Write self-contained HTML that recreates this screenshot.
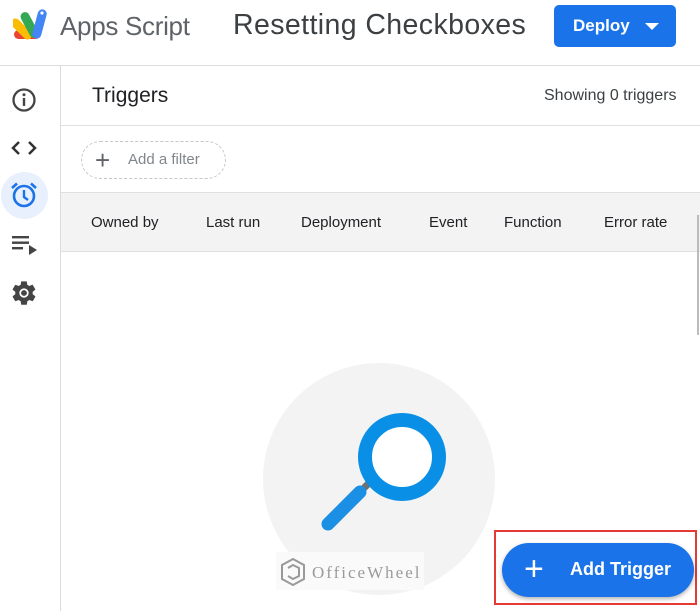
<!DOCTYPE html>
<html><head><style>
*{margin:0;padding:0;box-sizing:border-box}
body{width:700px;height:611px;background:#fff;font-family:"Liberation Sans",Arial,sans-serif;position:relative;overflow:hidden;color:#202124}
.a{position:absolute}
</style></head><body>
<svg class="a" style="left:13px;top:8px" width="42" height="34" viewBox="0 0 42 34">
<rect x="1" y="22" width="26" height="9" rx="4.5" fill="#ea4335"/>
<rect x="4" y="8" width="9" height="26" rx="4.5" fill="#fbbc04" transform="rotate(-45 8.5 21)"/>
<rect x="12" y="3" width="9" height="28" rx="4.5" fill="#34a853" transform="rotate(-28 16.5 17)"/>
<rect x="22" y="1" width="9" height="30" rx="4.5" fill="#4285f4" transform="rotate(15 26.5 16)"/>
<circle cx="29" cy="5" r="1.6" fill="#fff"/><circle cx="21" cy="4" r="1.6" fill="#fff"/>
</svg>
<div class="a" style="left:60px;top:11px;font-size:26px;color:#5f6368;letter-spacing:-0.3px">Apps Script</div>
<div class="a" style="left:233px;top:9px;font-size:28.5px;color:#3c4043;letter-spacing:0.4px">Resetting Checkboxes</div>
<div class="a" style="left:554px;top:5px;width:122px;height:42px;background:#1a73e8;border-radius:5px;color:#fff;font-size:17px;font-weight:bold;line-height:42px;padding-left:19px">Deploy<span style="position:absolute;left:91px;top:18px;border-left:7px solid transparent;border-right:7px solid transparent;border-top:7px solid #fff"></span></div>
<div class="a" style="left:0;top:65px;width:700px;height:1px;background:#dadce0"></div>
<div class="a" style="left:60px;top:66px;width:1px;height:545px;background:#dadce0"></div>
<svg class="a" style="left:10px;top:86px" width="28" height="28" viewBox="0 0 28 28"><circle cx="14" cy="14" r="10.5" fill="none" stroke="#444" stroke-width="2.3"/><rect x="12.8" y="12" width="2.4" height="8" fill="#444"/><circle cx="14" cy="8.7" r="1.5" fill="#444"/></svg>
<svg class="a" style="left:10px;top:135px" width="28" height="26" viewBox="0 0 28 26"><path d="M9 7L3 13L9 19M19 7L25 13L19 19" fill="none" stroke="#333" stroke-width="2.5"/></svg>
<div class="a" style="left:1px;top:172px;width:47px;height:47px;border-radius:50%;background:#e8f0fe"></div>
<svg class="a" style="left:9px;top:180px" width="30" height="30" viewBox="0 0 30 30"><circle cx="15" cy="16" r="10" fill="none" stroke="#1a73e8" stroke-width="2.6"/><path d="M15 10v7l4 3" fill="none" stroke="#1a73e8" stroke-width="2.4"/><path d="M3 8l5-4.5M27 8l-5-4.5" stroke="#1a73e8" stroke-width="2.6"/></svg>
<svg class="a" style="left:10px;top:233px" width="30" height="24" viewBox="0 0 30 24"><rect x="2" y="3" width="17" height="2.4" fill="#444"/><rect x="2" y="8.5" width="17" height="2.4" fill="#444"/><rect x="2" y="14" width="11" height="2.4" fill="#444"/><path d="M19 12l8 5-8 5z" fill="#444"/></svg>
<svg class="a" style="left:10px;top:279px" width="28" height="28" viewBox="0 0 24 24"><path fill="#444" d="M19.4 13c.04-.3.06-.6.06-1s-.02-.7-.06-1l2.1-1.7c.2-.15.24-.42.12-.64l-2-3.46c-.12-.22-.39-.3-.61-.22l-2.5 1c-.52-.4-1.08-.73-1.690-.98l-.38-2.65A.5.5 0 0 0 14 2h-4a.5.5 0 0 0-.49.42l-.38 2.65c-.61.25-1.17.59-1.69.98l-2.49-1c-.23-.09-.49 0-.61.22l-2 3.46c-.13.22-.07.49.12.64L4.57 11c-.04.3-.07.65-.07 1s.03.7.07 1l-2.11 1.65c-.19.15-.24.42-.12.64l2 3.46c.12.22.39.3.61.22l2.49-1c.52.4 1.080.73 1.69.98l.38 2.65c.03.24.24.42.49.42h4c.25 0 .46-.18.49-.42l.38-2.65c.61-.25 1.17-.59 1.69-.98l2.49 1c.23.09.49 0 .61-.22l2-3.46c.12-.22.07-.49-.12-.64zM12 16A4 4 0 1 1 12 8a4 4 0 0 1 0 8zm0-1.5a2.5 2.5 0 1 0 0-5 2.5 2.5 0 0 0 0 5z" fill-rule="evenodd"/></svg>
<div class="a" style="left:92px;top:84px;font-size:21px">Triggers</div>
<div class="a" style="left:544px;top:87px;font-size:16px;color:#3c4043">Showing 0 triggers</div>
<div class="a" style="left:61px;top:125px;width:639px;height:1px;background:#e0e0e0"></div>
<div class="a" style="left:81px;top:141px;width:145px;height:38px;border:1px dashed #c6c6c6;border-radius:19px"></div>
<div class="a" style="left:95px;top:145px;font-size:26px;color:#5f6368;font-weight:300">+</div>
<div class="a" style="left:128px;top:151px;font-size:15px;color:#80868b">Add a filter</div>
<div class="a" style="left:61px;top:192px;width:639px;height:60px;background:#f3f3f3;border-top:1px solid #e0e0e0;border-bottom:1px solid #e0e0e0"></div>
<div class="a" style="top:214px;left:0;font-size:15px;color:#202124;width:700px">
<span class="a" style="left:91px">Owned by</span><span class="a" style="left:206px">Last run</span><span class="a" style="left:301px">Deployment</span><span class="a" style="left:429px">Event</span><span class="a" style="left:504px">Function</span><span class="a" style="left:604px">Error rate</span></div>
<div class="a" style="left:697px;top:215px;width:2px;height:120px;background:#bbb"></div>
<div class="a" style="left:263px;top:363px;width:232px;height:232px;border-radius:50%;background:#f3f3f3"></div>
<svg class="a" style="left:300px;top:400px" width="160" height="150" viewBox="0 0 160 150">
<line x1="64" y1="88" x2="70" y2="82" stroke="#707070" stroke-width="7"/>
<line x1="60" y1="92" x2="28" y2="124" stroke="#1a8fe3" stroke-width="13" stroke-linecap="round"/>
<circle cx="102" cy="57" r="37" fill="#fff" stroke="#0a8fe6" stroke-width="14"/>
</svg>
<div class="a" style="left:276px;top:552px;width:148px;height:38px;background:#fafafa"></div>
<svg class="a" style="left:280px;top:557px" width="26" height="30" viewBox="0 0 26 30"><path d="M13 2L24 8V22L13 28L2 22V8Z M8 11L13 8L19 11V19L13 22L8 19" fill="none" stroke="#999" stroke-width="2"/></svg>
<div class="a" style="left:312px;top:563px;font-family:'Liberation Serif',serif;font-size:17px;letter-spacing:2px;color:#9a9a9a">OfficeWheel</div>
<div class="a" style="left:494px;top:530px;width:203px;height:75px;border:2.5px solid #e53935"></div>
<div class="a" style="left:502px;top:543px;width:192px;height:54px;border-radius:27px;background:#1a73e8;box-shadow:0 2px 4px rgba(0,0,0,.3)"></div>
<div class="a" style="left:524px;top:551px;font-size:34px;color:#fff;line-height:36px">+</div>
<div class="a" style="left:570px;top:559px;font-size:18px;font-weight:bold;color:#fff">Add Trigger</div>
</body></html>
